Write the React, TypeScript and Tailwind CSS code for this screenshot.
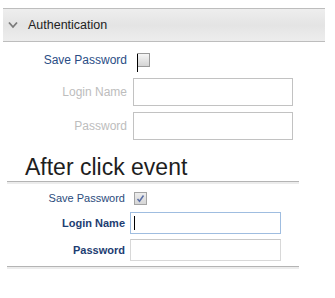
const font = "font-['Liberation_Sans',Arial,sans-serif]";

function Chevron() {
  return (
    <svg width="10" height="8" viewBox="0 0 10 8" className="shrink-0">
      <path d="M1 1.5 L5 6 L9 1.5" fill="none" stroke="#7a7a7a" strokeWidth="1.8" />
    </svg>
  );
}

function Divider() {
  return <div className="ml-[7px] w-[292px] h-[3px] border-t border-[#b4b4b4] bg-[#ececec]" />;
}

export default function App() {
  return (
    <div className={`${font} bg-white w-[335px] h-[298px] flex flex-col`}>
      {/* collapsible header */}
      <div className="mt-[8px] ml-[3px] w-[322px] h-[34px] flex items-center gap-[10px] pl-[5px] border-y border-[#bdbdbd] bg-gradient-to-b from-[#eeeeee] via-[#e4e4e4] to-[#ededed]">
        <Chevron />
        <span className="text-[12.5px] text-[#222]">Authentication</span>
      </div>

      {/* before */}
      <div className="flex items-center mt-[10px] h-[16px]">
        <span className="w-[127px] text-right text-[12px] text-[#2a4d85]">Save Password</span>
        <span className="relative ml-[10px] w-[13px] h-[14px] border border-[#9a9a9a] bg-gradient-to-b from-[#f6f6f6] to-[#d4d4d4]">
          <span className="absolute -left-[1px] top-0 w-[1px] h-[18px] bg-black" />
        </span>
      </div>
      <div className="flex items-center mt-[10px]">
        <span className="w-[127px] text-right text-[12px] text-[#bdbdbd]">Login Name</span>
        <div className="ml-[6px] w-[160px] h-[28px] border border-[#c2c2c2] bg-white" />
      </div>
      <div className="flex items-center mt-[6px]">
        <span className="w-[127px] text-right text-[12px] text-[#bdbdbd]">Password</span>
        <div className="ml-[6px] w-[160px] h-[28px] border border-[#c2c2c2] bg-white" />
      </div>

      <div className="mt-[16px] ml-[25px] h-[23px] text-[23px] leading-none text-[#1e1e1e]">After click event</div>
      <div className="mt-[2px]">
        <Divider />
      </div>

      {/* after */}
      <div className="flex items-center mt-[7px] h-[14px]">
        <span className="w-[125px] text-right text-[11px] text-[#2b4b7c]">Save Password</span>
        <span className="ml-[9px] w-[13px] h-[13px] border border-[#a4a4a4] bg-gradient-to-b from-[#ececec] to-[#d6d6d6] flex items-center justify-center">
          <svg width="9" height="9" viewBox="0 0 9 9">
            <path d="M1.5 5 L3.5 7.2 L7.5 1.5" fill="none" stroke="#5b6fa6" strokeWidth="1.5" />
          </svg>
        </span>
      </div>
      <div className="flex items-center mt-[7px]">
        <span className="w-[125px] text-right text-[11px] font-bold text-[#1d3d72]">Login Name</span>
        <div className="ml-[5px] w-[151px] h-[22px] border border-[#9fbde0] bg-white flex items-center pl-[3px]">
          <span className="w-[1px] h-[14px] bg-black" />
        </div>
      </div>
      <div className="flex items-center mt-[5px]">
        <span className="w-[125px] text-right text-[11px] font-bold text-[#1d3d72]">Password</span>
        <div className="ml-[5px] w-[151px] h-[22px] border border-[#d8d8d8] border-t-[#c8c8c8] bg-white" />
      </div>
      <div className="mt-[5px]">
        <Divider />
      </div>
    </div>
  );
}
